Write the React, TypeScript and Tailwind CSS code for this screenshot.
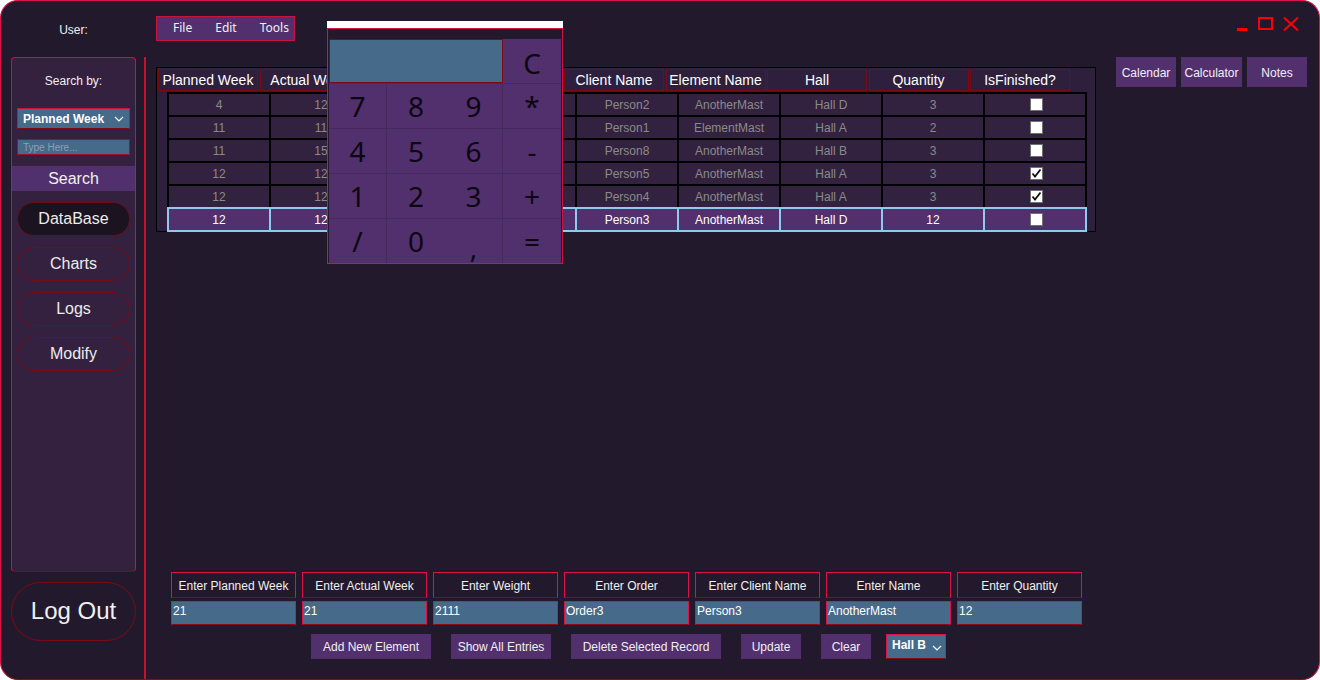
import React from 'react';

// Data for the planning grid
const headers = ['Planned Week', 'Actual Week', '', '', 'Client Name', 'Element Name', 'Hall', 'Quantity', 'IsFinished?'];

type Row = {
  pw: string;
  aw: string;
  client: string;
  element: string;
  hall: string;
  qty: string;
  done: boolean;
};

// weight / order cells sit under the calculator window, so they stay blank here
const rows: Row[] = [
  { pw: '4', aw: '12', client: 'Person2', element: 'AnotherMast', hall: 'Hall D', qty: '3', done: false },
  { pw: '11', aw: '11', client: 'Person1', element: 'ElementMast', hall: 'Hall A', qty: '2', done: false },
  { pw: '11', aw: '15', client: 'Person8', element: 'AnotherMast', hall: 'Hall B', qty: '3', done: false },
  { pw: '12', aw: '12', client: 'Person5', element: 'AnotherMast', hall: 'Hall A', qty: '3', done: true },
  { pw: '12', aw: '12', client: 'Person4', element: 'AnotherMast', hall: 'Hall A', qty: '3', done: true },
  { pw: '12', aw: '12', client: 'Person3', element: 'AnotherMast', hall: 'Hall D', qty: '12', done: false },
];

const formFields = [
  { label: 'Enter Planned Week', value: '21' },
  { label: 'Enter Actual Week', value: '21' },
  { label: 'Enter Weight', value: '2111' },
  { label: 'Enter Order', value: 'Order3' },
  { label: 'Enter Client Name', value: 'Person3' },
  { label: 'Enter Name', value: 'AnotherMast' },
  { label: 'Enter Quantity', value: '12' },
];

const calcKeys = ['7', '8', '9', '*', '4', '5', '6', '-', '1', '2', '3', '+', '/', '0', ',', '='];

const Chevron = () => (
  <svg width="10" height="6" viewBox="0 0 10 6" fill="none">
    <polyline points="1,1 5,5 9,1" stroke="#ffffff" strokeWidth="1.2" />
  </svg>
);

const CheckBox = ({ checked }: { checked: boolean }) => (
  <div className="w-[13px] h-[13px] bg-white border border-[#707070] flex items-center justify-center">
    {checked && (
      <svg width="11" height="11" viewBox="0 0 11 11" fill="none">
        <polyline points="1.5,5.5 4,8.5 9.5,1.5" stroke="#111111" strokeWidth="1.8" />
      </svg>
    )}
  </div>
);

const NavPill = ({ label, active }: { label: string; active?: boolean }) => (
  <div
    className={
      active
        ? 'mx-[5px] mt-[11px] h-[34px] rounded-full border border-[#6e0a14] bg-[#1b1420] flex items-center justify-center text-[16px] text-[#ececec]'
        : 'mx-[5px] mt-[11px] h-[34px] rounded-full border border-[#7a0a14] flex items-center justify-center text-[16px] text-[#ececec]'
    }
  >
    {label}
  </div>
);

const Calculator = () => (
  <div className="absolute left-[326px] top-[20px] w-[236px] flex flex-col">
    <div className="h-[7px] bg-white" />
    <div className="border border-[#d3143e] bg-[#221a2c] px-[1px]">
      <div className="h-[10px]" />
      <div className="grid grid-cols-[58px_58px_58px_58px] grid-rows-[44px_45px_45px_45px_45px] bg-[#52306e] font-['Noto_Sans',sans-serif] text-[#0c0610]">
        <div className="col-span-3 bg-[#456a8a] border border-[#7d0a14]" />
        <div className="flex items-center justify-center text-[28px] pt-[4px]">C</div>
        {calcKeys.map((k, i) => {
          const col = i % 4;
          let cls = 'flex items-center justify-center text-[28px] border-t border-[#46295e]';
          if (col === 0 || col === 2) cls += ' border-r';
          return (
            <div key={k + i} className={cls}>
              <span className={k === ',' ? 'translate-y-[6px]' : ''}>{k}</span>
            </div>
          );
        })}
      </div>
    </div>
  </div>
);

const DataTable = () => (
  <div className="mt-[10px] w-[940px] h-[165px] border border-black bg-[#2e1f3c] pt-[1px] pl-[1px]">
    <div className="grid grid-cols-[repeat(9,100px)] gap-x-[1.5px] h-[22px]">
      {headers.map((h, i) => (
        <div key={i} className="border border-[#7a0a14] flex items-center justify-center text-[14px] text-white whitespace-nowrap overflow-hidden">
          {h}
        </div>
      ))}
    </div>
    <div className="ml-[9px] mt-[1px] w-[920px] flex flex-col">
      {rows.map((r, i) => {
        const selected = i === rows.length - 1;
        const cells = [r.pw, r.aw, '', '', r.client, r.element, r.hall, r.qty];
        return (
          <div
            key={i}
            className={
              selected
                ? 'grid grid-cols-[repeat(9,100px)] gap-x-[2px] p-[2px] bg-[#8ecbee]'
                : 'grid grid-cols-[repeat(9,100px)] gap-x-[2px] px-[2px] pt-[2px] bg-black'
            }
          >
            {cells.map((c, j) => (
              <div
                key={j}
                className={
                  selected
                    ? 'h-[21px] bg-[#52306e] flex items-center justify-center text-[12px] text-white'
                    : 'h-[21px] bg-[#33223f] flex items-center justify-center text-[12px] text-[#8a8a8a]'
                }
              >
                {c}
              </div>
            ))}
            <div className={selected ? 'h-[21px] bg-[#52306e] flex items-center justify-center pl-[3px]' : 'h-[21px] bg-[#33223f] flex items-center justify-center pl-[3px]'}>
              <CheckBox checked={r.done} />
            </div>
          </div>
        );
      })}
    </div>
  </div>
);

const App: React.FC = () => {
  return (
    <div className="w-[1320px] h-[680px] bg-white">
      <div className="relative w-full h-full rounded-[18px] border border-[#dc1446] border-b-[#8b0b14] bg-[#221a2c] flex overflow-hidden font-['Liberation_Sans',Arial,sans-serif] text-white">
        {/* Left column */}
        <div className="w-[143px] shrink-0 flex flex-col pl-[10px] pr-[8px]">
          <div className="h-[56px] flex items-center justify-center pt-[2px] text-[12px] text-[#f0f0f0]">User:</div>
          <div className="h-[515px] rounded-[4px] border border-[#c8143c] border-b-[#7d0a14] bg-[#34213f] flex flex-col">
            <div className="mt-[16px] h-[14px] flex items-center justify-center text-[12px] text-[#f0f0f0]">Search by:</div>
            <div className="mx-[5px] mt-[20px] h-[21px] bg-[#456a8a] border border-[#c8143c] border-b-[#7d0a14] flex items-center justify-between pl-[5px] pr-[5px]">
              <span className="text-[12px] font-bold text-white">Planned Week</span>
              <Chevron />
            </div>
            <div className="mx-[5px] mt-[10px] h-[16px] bg-[#456a8a] border border-[#a0102a] flex items-center pl-[5px] text-[10px] text-[#8aa0b4]">
              Type Here...
            </div>
            <div className="mt-[11px] h-[25px] bg-[#52306e] flex items-center justify-center pt-[1px] text-[16px] text-[#f0f0f0]">Search</div>
            <NavPill label="DataBase" active />
            <NavPill label="Charts" />
            <NavPill label="Logs" />
            <NavPill label="Modify" />
          </div>
          <div className="mt-[10px] h-[59px] rounded-full border border-[#7a0a14] flex items-center justify-center pb-[1px] text-[24px] text-[#f0f0f0]">
            Log Out
          </div>
        </div>

        {/* Divider */}
        <div className="w-[2px] mt-[56px] bg-[#c8102e] shrink-0" />

        {/* Main area */}
        <div className="flex-1 flex flex-col pl-[10px]">
          <div className="h-[56px] flex items-start pt-[15px]">
            <div className="h-[25px] w-[139px] bg-[#52306e] border border-[#c8143c] flex items-center pl-[16px] gap-[23px] pb-[2px] text-[12px] font-['Noto_Sans',sans-serif] text-[#f0f0f0]">
              <span>File</span>
              <span>Edit</span>
              <span>Tools</span>
            </div>
            <div className="ml-auto mr-[20px] pt-[1px] flex items-start gap-[11px]">
              <div className="mt-[11px] w-[10px] h-[3px] bg-[#ff0000]" />
              <div className="w-[15px] h-[13px] border-2 border-[#ff0000]" />
              <svg width="16" height="14" viewBox="0 0 16 14" className="ml-[-1px]">
                <line x1="1" y1="0.5" x2="15" y2="13.5" stroke="#ff0000" strokeWidth="2" />
                <line x1="15" y1="0.5" x2="1" y2="13.5" stroke="#ff0000" strokeWidth="2" />
              </svg>
            </div>
          </div>

          <div className="flex items-start">
            <DataTable />
            <div className="ml-[20px] flex gap-[5px] text-[12px] text-[#f0f0f0]">
              <div className="w-[60px] h-[30px] bg-[#52306e] flex items-center justify-center pt-[1px]">Calendar</div>
              <div className="w-[61px] h-[30px] bg-[#52306e] flex items-center justify-center pt-[1px]">Calculator</div>
              <div className="w-[60px] h-[30px] bg-[#52306e] flex items-center justify-center pt-[1px]">Notes</div>
            </div>
          </div>

          <div className="flex-1" />

          {/* Entry form */}
          <div className="pl-[15px] pb-[20px]">
            <div className="flex gap-[6px]">
              {formFields.map((f) => (
                <div key={f.label} className="w-[125px] flex flex-col">
                  <div className="h-[26px] border border-[#dc1446] border-b-[#8b0b14] flex items-center justify-center pt-[1px] text-[12px] text-[#f0f0f0]">
                    {f.label}
                  </div>
                  <div className="mt-[3px] h-[24px] bg-[#456a8a] border border-[#dc1446] border-b-[#8b0b14] pl-[1px] pt-[2px] text-[12px] leading-[14px] text-white">
                    {f.value}
                  </div>
                </div>
              ))}
            </div>
            <div className="mt-[9px] ml-[140px] flex items-center text-[12px] text-[#f0f0f0]">
              <div className="w-[120px] h-[25px] bg-[#52306e] flex items-center justify-center">Add New Element</div>
              <div className="ml-[20px] w-[100px] h-[25px] bg-[#52306e] flex items-center justify-center">Show All Entries</div>
              <div className="ml-[20px] w-[150px] h-[25px] bg-[#52306e] flex items-center justify-center">Delete Selected Record</div>
              <div className="ml-[20px] w-[60px] h-[25px] bg-[#52306e] flex items-center justify-center">Update</div>
              <div className="ml-[20px] w-[50px] h-[25px] bg-[#52306e] flex items-center justify-center">Clear</div>
              <div className="ml-[15px] w-[60px] h-[25px] bg-[#456a8a] border border-[#dc1446] border-b-[#8b0b14] flex items-center justify-between pl-[5px] pr-[3px] pb-[3px]">
                <span className="font-bold text-white">Hall B</span>
                <span className="pt-[5px]"><Chevron /></span>
              </div>
            </div>
          </div>
        </div>

        <Calculator />
      </div>
    </div>
  );
};

export default App;
